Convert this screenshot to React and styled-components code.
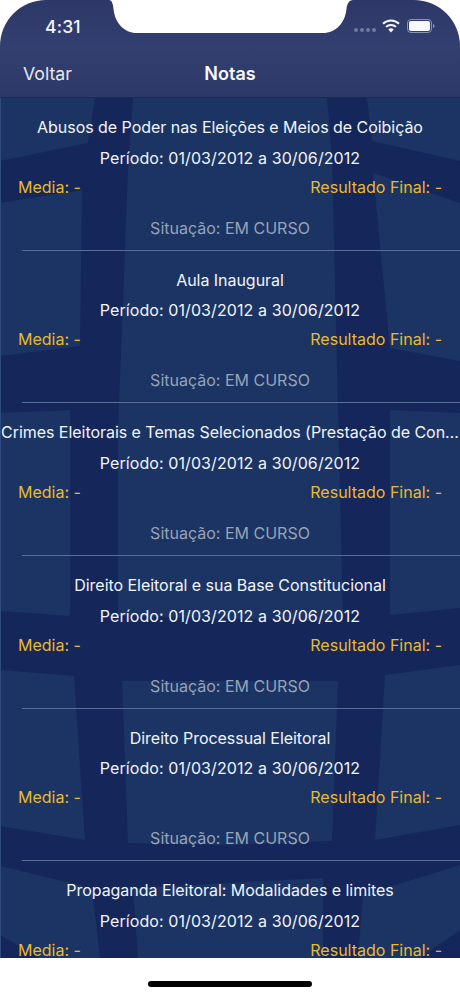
import React from 'react'
import styled, { createGlobalStyle } from 'styled-components'

const GlobalStyle = createGlobalStyle`
    html, body {
        margin: 0;
        padding: 0;
        background: #ffffff;
    }
    body {
        font-family: Inter, "Noto Sans", "Liberation Sans", sans-serif;
    }
`

const Page = styled.div`
    position: relative;
    width: 460px;
    height: 996px;
    display: flex;
    flex-direction: column;
    overflow: hidden;
    background: #ffffff;
`

const Screen = styled.div`
    height: 958px;
    display: flex;
    flex-direction: column;
    overflow: hidden;
    border-radius: 46px 46px 0 0;
`

const Header = styled.header`
    height: 98px;
    flex-shrink: 0;
    display: flex;
    flex-direction: column;
    background: linear-gradient(#2d3868 0%, #333f70 50%, #2c3866 100%);
    border-bottom: 1px solid #1a2a58;
    box-sizing: border-box;
`

const StatusBar = styled.div`
    height: 52px;
    display: flex;
    align-items: center;
    justify-content: space-between;
    padding: 0 25px 0 45px;
`

const Time = styled.span`
    color: #f4f5f9;
    font-size: 17.5px;
    font-weight: 500;
    letter-spacing: 0.2px;
`

const StatusIcons = styled.div`
    display: flex;
    align-items: center;
`

const SignalDots = styled.div`
    display: flex;
    gap: 2px;
    margin: 8px 6px 0 0;
`

const Dot = styled.span`
    width: 4px;
    height: 4px;
    border-radius: 50%;
    background: #6f7a9e;
`

const NavBar = styled.nav`
    flex: 1;
    display: grid;
    grid-template-columns: 1fr auto 1fr;
    align-items: center;
    padding: 0 23px 3px;
`

const BackLink = styled.span`
    color: #e6e9f2;
    font-size: 17.7px;
`

const Title = styled.span`
    color: #f6f7fb;
    font-size: 18px;
    font-weight: 600;
`

const ListArea = styled.div`
    position: relative;
    flex: 1;
    overflow: hidden;
    background: #15265a;
    border-left: 1px solid #2f4a7c;
`

const Backdrop = styled.svg`
    position: absolute;
    top: 0;
    left: -1px;
    width: 460px;
    height: 860px;
`

const List = styled.div`
    position: relative;
    display: flex;
    flex-direction: column;
`

const Row = styled.div`
    height: 152.67px;
    flex-shrink: 0;
    box-sizing: border-box;
    padding-top: 14px;
    display: flex;
    flex-direction: column;
`

const CourseName = styled.div`
    margin-left: -1px;
    width: calc(100% + 1px);
    padding: 0 1px;
    line-height: 30px;
    box-sizing: border-box;
    text-align: center;
    color: #f2f4f8;
    font-size: 16px;
    letter-spacing: -0.04px;
    white-space: nowrap;
    overflow: hidden;
    text-overflow: ellipsis;
`

const Period = styled.div`
    margin-top: 1px;
    line-height: 30px;
    padding-right: 1px;
    text-align: center;
    color: #f2f4f8;
    font-size: 16px;
    letter-spacing: 0.09px;
`

const Grades = styled.div`
    display: flex;
    justify-content: space-between;
    padding: 0 18px 0 17px;
    line-height: 28px;
    color: #e8ba2e;
    font-size: 16px;
`

const Status = styled.div`
    margin-top: 13px;
    line-height: 28px;
    padding-right: 1px;
    text-align: center;
    color: #97a2b6;
    font-size: 16px;
`

const Separator = styled.div`
    margin: 8px 0 0 21px;
    height: 1px;
    background: #5a6d96;
`

const Notch = styled.svg`
    position: absolute;
    top: 0;
    left: 100px;
    width: 260px;
    height: 34px;
`

const HomeBar = styled.div`
    position: absolute;
    left: 148px;
    bottom: 9px;
    width: 164px;
    height: 6px;
    border-radius: 3px;
    background: #000000;
`

const courses = [
    'Abusos de Poder nas Eleições e Meios de Coibição',
    'Aula Inaugural',
    'Crimes Eleitorais e Temas Selecionados (Prestação de Contas e Financiamento)',
    'Direito Eleitoral e sua Base Constitucional',
    'Direito Processual Eleitoral',
    'Propaganda Eleitoral: Modalidades e limites',
]

// light panels of the watermark behind the list, y measured from the top of the list
const panels = [
    '0,0 95,0 88,45 0,63',
    '0,105 82,92 80,248 0,258',
    '0,315 70,312 70,518 0,513',
    '0,572 74,578 85,742 0,728',
    '0,768 92,790 100,860 40,860 0,837',
    '133,0 327,0 332,60 343,522 230,521 118,518 118,333 128,72',
    '122,583 338,583 332,743 230,747 128,745',
    '133,790 230,785 323,780 323,860 138,860',
    '367,0 460,0 460,63 372,43',
    '373,75 460,105 460,263 390,250',
    '390,312 460,315 460,510 390,517',
    '385,577 460,567 460,727 375,742',
    '363,797 460,767 460,832 420,860 358,860',
]

function WifiIcon() {
    return (
        <svg width="18" height="14" viewBox="0 0 18 14">
            <path d="M1 4.8 A11.5 11.5 0 0 1 17 4.8" fill="none" stroke="#f6f7fb" strokeWidth="2" />
            <path d="M4 7.9 A7.2 7.2 0 0 1 14 7.9" fill="none" stroke="#f6f7fb" strokeWidth="2" />
            <path d="M9 13.5 L6.3 10.6 A3.9 3.9 0 0 1 11.7 10.6 Z" fill="#f6f7fb" />
        </svg>
    )
}

function BatteryIcon() {
    return (
        <svg width="28" height="14" viewBox="0 0 28 14" style={{ marginLeft: 7 }}>
            <rect x="0.5" y="0.5" width="24" height="13" rx="3.5" fill="none" stroke="#8b94b5" />
            <rect x="2" y="2" width="21" height="10" rx="2" fill="#f8f9fc" />
            <path d="M26 5 C27 5.3 27.5 6 27.5 7 C27.5 8 27 8.7 26 9 Z" fill="#8b94b5" />
        </svg>
    )
}

function CourseRow({ name, last }) {
    return (
        <Row>
            <CourseName>{name}</CourseName>
            <Period>Período: 01/03/2012 a 30/06/2012</Period>
            <Grades>
                <span>Media: -</span>
                <span>Resultado Final: -</span>
            </Grades>
            <Status>Situação: EM CURSO</Status>
            {!last && <Separator />}
        </Row>
    )
}

export default function App() {
    return (
        <Page>
            <GlobalStyle />
            <Screen>
                <Header>
                    <StatusBar>
                        <Time>4:31</Time>
                        <StatusIcons>
                            <SignalDots>
                                <Dot />
                                <Dot />
                                <Dot />
                                <Dot />
                            </SignalDots>
                            <WifiIcon />
                            <BatteryIcon />
                        </StatusIcons>
                    </StatusBar>
                    <NavBar>
                        <BackLink>Voltar</BackLink>
                        <Title>Notas</Title>
                    </NavBar>
                </Header>
                <ListArea>
                    <Backdrop viewBox="0 0 460 860">
                        {panels.map((points) => (
                            <polygon key={points} points={points} fill="#1b3464" />
                        ))}
                    </Backdrop>
                    <List>
                        {courses.map((name, i) => (
                            <CourseRow key={name} name={name} last={i === courses.length - 1} />
                        ))}
                    </List>
                </ListArea>
            </Screen>
            <Notch viewBox="0 0 260 34">
                <path
                    d="M9 0 C12 0 13 4 13.5 9 C15 23 24 33 37 33 L223 33 C236 33 245 23 246.5 9 C247 4 249 0 253 0 Z"
                    fill="#ffffff"
                />
            </Notch>
            <HomeBar />
        </Page>
    )
}
